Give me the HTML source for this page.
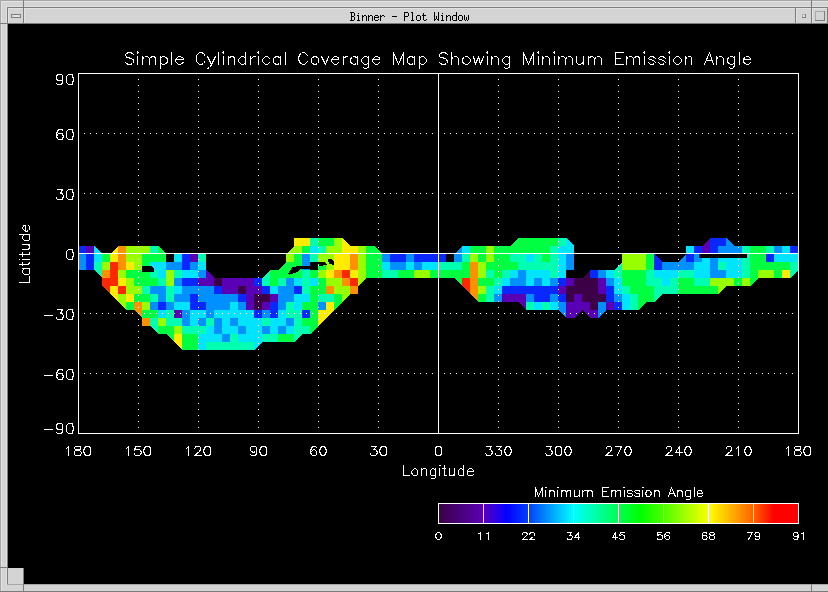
<!DOCTYPE html>
<html><head><meta charset="utf-8"><style>html,body{margin:0;padding:0;background:#000;overflow:hidden}svg{display:block}</style></head>
<body><svg width="828" height="592" viewBox="0 0 828 592" shape-rendering="crispEdges">
<rect x="0" y="0" width="828" height="592" fill="#d4d4d4"/><rect x="0" y="0" width="828" height="1" fill="#a8a8a8"/><rect x="0" y="0" width="1" height="592" fill="#a8a8a8"/><rect x="1" y="1" width="827" height="1" fill="#e2e2e2"/><rect x="1" y="1" width="1" height="591" fill="#e2e2e2"/><rect x="8" y="8" width="820" height="1" fill="#e2e2e2"/><rect x="8" y="8" width="1" height="15" fill="#e2e2e2"/><rect x="24" y="8" width="1" height="15" fill="#e2e2e2"/><rect x="796" y="8" width="1" height="15" fill="#e2e2e2"/><rect x="812" y="8" width="1" height="15" fill="#e2e2e2"/><rect x="6" y="6" width="822" height="1" fill="#e2e2e2"/><rect x="6" y="6" width="1" height="578" fill="#e2e2e2"/><rect x="8" y="24" width="820" height="560" fill="#000"/><rect x="7" y="7" width="821" height="1" fill="#7c7c7c"/><rect x="7" y="7" width="1" height="577" fill="#7c7c7c"/><rect x="0" y="23" width="828" height="1" fill="#7c7c7c"/><rect x="23" y="0" width="1" height="24" fill="#7c7c7c"/><rect x="811" y="0" width="1" height="24" fill="#7c7c7c"/><rect x="795" y="8" width="1" height="16" fill="#7c7c7c"/><rect x="827" y="8" width="1" height="16" fill="#7c7c7c"/><rect x="0" y="567" width="8" height="1" fill="#7c7c7c"/><rect x="8" y="568" width="16" height="16" fill="#d4d4d4"/><rect x="7" y="584" width="821" height="1" fill="#a8a8a8"/><rect x="23" y="568" width="1" height="24" fill="#7c7c7c"/><rect x="811" y="584" width="1" height="8" fill="#7c7c7c"/><rect x="0" y="591" width="828" height="1" fill="#7c7c7c"/><rect x="11" y="14" width="10" height="4" fill="#7c7c7c"/><rect x="12" y="15" width="8" height="2" fill="#e2e2e2"/><rect x="802" y="14" width="4" height="4" fill="#7c7c7c"/><rect x="802" y="14" width="3" height="3" fill="#b0b0b0"/><rect x="803" y="15" width="2" height="2" fill="#e2e2e2"/><rect x="815" y="11" width="10" height="10" fill="#7c7c7c"/><rect x="815" y="11" width="9" height="9" fill="#a8a8a8"/><rect x="816" y="12" width="8" height="8" fill="#d4d4d4"/><path fill="#000" d="M350 12h4v1h-4zM404 12h4v1h-4zM411 12h2v1h-2zM434 12h1v1h-1zM438 12h1v1h-1zM456 12h1v1h-1zM351 13h1v1h-1zM354 13h1v1h-1zM358 13h1v1h-1zM404 13h1v1h-1zM408 13h1v1h-1zM412 13h1v1h-1zM423 13h1v1h-1zM434 13h1v1h-1zM438 13h1v1h-1zM442 13h1v1h-1zM456 13h1v1h-1zM351 14h1v1h-1zM354 14h1v1h-1zM404 14h1v1h-1zM408 14h1v1h-1zM412 14h1v1h-1zM423 14h1v1h-1zM434 14h1v1h-1zM438 14h1v1h-1zM456 14h1v1h-1zM351 15h1v1h-1zM354 15h1v1h-1zM357 15h2v1h-2zM362 15h1v1h-1zM364 15h2v1h-2zM368 15h1v1h-1zM370 15h2v1h-2zM375 15h3v1h-3zM380 15h1v1h-1zM382 15h2v1h-2zM404 15h1v1h-1zM408 15h1v1h-1zM412 15h1v1h-1zM417 15h3v1h-3zM422 15h4v1h-4zM434 15h1v1h-1zM438 15h1v1h-1zM441 15h2v1h-2zM446 15h1v1h-1zM448 15h2v1h-2zM453 15h4v1h-4zM459 15h3v1h-3zM464 15h1v1h-1zM468 15h1v1h-1zM351 16h3v1h-3zM358 16h1v1h-1zM362 16h2v1h-2zM366 16h1v1h-1zM368 16h2v1h-2zM372 16h1v1h-1zM374 16h1v1h-1zM378 16h1v1h-1zM380 16h2v1h-2zM384 16h1v1h-1zM392 16h5v1h-5zM404 16h4v1h-4zM412 16h1v1h-1zM416 16h1v1h-1zM420 16h1v1h-1zM423 16h1v1h-1zM434 16h1v1h-1zM436 16h1v1h-1zM438 16h1v1h-1zM442 16h1v1h-1zM446 16h2v1h-2zM450 16h1v1h-1zM452 16h1v1h-1zM456 16h1v1h-1zM458 16h1v1h-1zM462 16h1v1h-1zM464 16h1v1h-1zM468 16h1v1h-1zM351 17h1v1h-1zM354 17h1v1h-1zM358 17h1v1h-1zM362 17h1v1h-1zM366 17h1v1h-1zM368 17h1v1h-1zM372 17h1v1h-1zM374 17h5v1h-5zM380 17h1v1h-1zM404 17h1v1h-1zM412 17h1v1h-1zM416 17h1v1h-1zM420 17h1v1h-1zM423 17h1v1h-1zM434 17h1v1h-1zM436 17h1v1h-1zM438 17h1v1h-1zM442 17h1v1h-1zM446 17h1v1h-1zM450 17h1v1h-1zM452 17h1v1h-1zM456 17h1v1h-1zM458 17h1v1h-1zM462 17h1v1h-1zM464 17h1v1h-1zM466 17h1v1h-1zM468 17h1v1h-1zM351 18h1v1h-1zM354 18h1v1h-1zM358 18h1v1h-1zM362 18h1v1h-1zM366 18h1v1h-1zM368 18h1v1h-1zM372 18h1v1h-1zM374 18h1v1h-1zM380 18h1v1h-1zM404 18h1v1h-1zM412 18h1v1h-1zM416 18h1v1h-1zM420 18h1v1h-1zM423 18h1v1h-1zM434 18h1v1h-1zM436 18h1v1h-1zM438 18h1v1h-1zM442 18h1v1h-1zM446 18h1v1h-1zM450 18h1v1h-1zM452 18h1v1h-1zM456 18h1v1h-1zM458 18h1v1h-1zM462 18h1v1h-1zM464 18h1v1h-1zM466 18h1v1h-1zM468 18h1v1h-1zM351 19h1v1h-1zM354 19h1v1h-1zM358 19h1v1h-1zM362 19h1v1h-1zM366 19h1v1h-1zM368 19h1v1h-1zM372 19h1v1h-1zM374 19h1v1h-1zM378 19h1v1h-1zM380 19h1v1h-1zM404 19h1v1h-1zM412 19h1v1h-1zM416 19h1v1h-1zM420 19h1v1h-1zM423 19h1v1h-1zM426 19h1v1h-1zM434 19h2v1h-2zM437 19h2v1h-2zM442 19h1v1h-1zM446 19h1v1h-1zM450 19h1v1h-1zM452 19h1v1h-1zM456 19h1v1h-1zM458 19h1v1h-1zM462 19h1v1h-1zM464 19h1v1h-1zM466 19h1v1h-1zM468 19h1v1h-1zM350 20h4v1h-4zM357 20h3v1h-3zM362 20h1v1h-1zM366 20h1v1h-1zM368 20h1v1h-1zM372 20h1v1h-1zM375 20h3v1h-3zM380 20h1v1h-1zM404 20h1v1h-1zM411 20h3v1h-3zM417 20h3v1h-3zM424 20h2v1h-2zM434 20h1v1h-1zM438 20h1v1h-1zM441 20h3v1h-3zM446 20h1v1h-1zM450 20h1v1h-1zM453 20h4v1h-4zM459 20h3v1h-3zM465 20h1v1h-1zM467 20h1v1h-1z"/><path fill="#0828ff" d="M78 246h8v8h-8zM86 254h8v8h-8zM86 262h8v8h-8zM182 254h8v8h-8zM182 262h8v8h-8zM182 278h8v8h-8zM190 278h8v8h-8zM254 278h8v8h-8zM390 254h8v8h-8zM398 254h8v8h-8zM414 254h8v8h-8zM422 254h8v8h-8zM430 254h8v8h-8zM438 254h8v8h-8zM558 278h8v8h-8zM590 270h8v8h-8zM710 238h8v8h-8zM694 246h8v8h-8zM710 246h8v8h-8zM686 254h8v8h-8zM654 262h8v8h-8zM718 238h8v8h-8zM790 246h8v8h-8zM766 254h8v8h-8zM190 294h8v8h-8zM158 302h8v8h-8zM190 302h8v8h-8zM198 302h8v8h-8zM214 286h8v8h-8zM262 286h8v8h-8zM238 294h8v8h-8zM254 310h8v8h-8zM294 286h8v8h-8zM270 302h8v8h-8zM270 310h8v8h-8zM302 310h8v8h-8zM502 286h8v8h-8zM510 286h8v8h-8zM518 286h8v8h-8zM526 286h8v8h-8zM534 286h8v8h-8zM542 286h8v8h-8zM550 286h8v8h-8zM534 294h8v8h-8zM542 294h8v8h-8zM558 294h8v8h-8zM606 286h8v8h-8zM606 294h8v8h-8zM614 302h8v8h-8zM654 254L654 262L662 262z"/><path fill="#5a00b4" d="M86 246h8v8h-8zM190 254h8v8h-8zM198 278h8v8h-8zM206 278h8v8h-8zM222 278h8v8h-8zM230 278h8v8h-8zM238 278h8v8h-8zM246 278h8v8h-8zM566 278h8v8h-8zM598 278h8v8h-8zM702 246h8v8h-8zM174 310h8v8h-8zM222 286h8v8h-8zM230 286h8v8h-8zM246 286h8v8h-8zM254 286h8v8h-8zM246 294h8v8h-8zM246 302h8v8h-8zM262 302h8v8h-8zM270 294h8v8h-8zM502 294h8v8h-8zM510 294h8v8h-8zM518 294h8v8h-8zM558 286h8v8h-8zM574 294h8v8h-8zM566 302h8v8h-8zM574 302h8v8h-8zM582 302h8v8h-8zM566 310h8v8h-8zM598 286h8v8h-8zM606 302h8v8h-8zM590 310h8v8h-8zM206 270L206 278L214 278zM518 302L526 302L526 310zM574 310L582 310L574 318zM582 310L590 310L590 318zM710 238L710 246L702 246z"/><path fill="#ff9000" d="M118 246h8v8h-8zM118 254h8v8h-8zM118 262h8v8h-8zM102 270h8v8h-8zM350 254h8v8h-8zM350 262h8v8h-8zM334 270h8v8h-8zM342 278h8v8h-8zM470 262h8v8h-8zM470 270h8v8h-8zM470 278h8v8h-8zM134 302h8v8h-8zM142 318h8v8h-8zM326 286h8v8h-8zM350 286h8v8h-8zM470 286h8v8h-8zM134 310L142 310L142 318zM470 294L478 294L478 302z"/><path fill="#98ff00" d="M126 246h8v8h-8zM134 246h8v8h-8zM126 254h8v8h-8zM134 254h8v8h-8zM102 262h8v8h-8zM134 262h8v8h-8zM118 270h8v8h-8zM126 278h8v8h-8zM142 246h8v8h-8zM166 270h8v8h-8zM166 278h8v8h-8zM294 246h8v8h-8zM326 246h8v8h-8zM286 254h8v8h-8zM318 254h8v8h-8zM326 254h8v8h-8zM326 262h8v8h-8zM318 270h8v8h-8zM326 278h8v8h-8zM334 238h8v8h-8zM334 246h8v8h-8zM358 246h8v8h-8zM358 254h8v8h-8zM358 262h8v8h-8zM358 270h8v8h-8zM334 278h8v8h-8zM414 270h8v8h-8zM422 270h8v8h-8zM486 246h8v8h-8zM470 254h8v8h-8zM486 254h8v8h-8zM478 262h8v8h-8zM478 270h8v8h-8zM622 254h8v8h-8zM630 254h8v8h-8zM638 254h8v8h-8zM622 262h8v8h-8zM630 262h8v8h-8zM638 262h8v8h-8zM710 278h8v8h-8zM758 270h8v8h-8zM766 270h8v8h-8zM718 278h8v8h-8zM726 278h8v8h-8zM742 278h8v8h-8zM126 286h8v8h-8zM134 286h8v8h-8zM118 294h8v8h-8zM142 302h8v8h-8zM158 318h8v8h-8zM174 326h8v8h-8zM334 286h8v8h-8zM342 286h8v8h-8zM478 286h8v8h-8zM118 302L126 302L126 310zM294 246L294 254L286 254zM342 294L350 294L342 302zM358 278L366 278L358 286zM718 286L726 286L718 294z"/><path fill="#0090ff" d="M78 254h8v8h-8zM78 262h8v8h-8zM166 262h8v8h-8zM174 262h8v8h-8zM190 262h8v8h-8zM198 270h8v8h-8zM174 278h8v8h-8zM302 254h8v8h-8zM302 262h8v8h-8zM286 278h8v8h-8zM382 254h8v8h-8zM390 262h8v8h-8zM406 254h8v8h-8zM454 254h8v8h-8zM398 262h8v8h-8zM414 262h8v8h-8zM518 270h8v8h-8zM510 278h8v8h-8zM518 278h8v8h-8zM566 254h8v8h-8zM566 262h8v8h-8zM534 278h8v8h-8zM550 278h8v8h-8zM598 270h8v8h-8zM606 278h8v8h-8zM694 254h8v8h-8zM710 254h8v8h-8zM662 262h8v8h-8zM670 262h8v8h-8zM678 262h8v8h-8zM686 262h8v8h-8zM710 262h8v8h-8zM710 270h8v8h-8zM718 246h8v8h-8zM726 246h8v8h-8zM734 246h8v8h-8zM774 246h8v8h-8zM718 270h8v8h-8zM150 286h8v8h-8zM158 286h8v8h-8zM182 286h8v8h-8zM190 286h8v8h-8zM198 286h8v8h-8zM158 294h8v8h-8zM174 294h8v8h-8zM182 294h8v8h-8zM198 294h8v8h-8zM150 302h8v8h-8zM166 302h8v8h-8zM182 310h8v8h-8zM182 318h8v8h-8zM198 318h8v8h-8zM206 286h8v8h-8zM206 294h8v8h-8zM214 294h8v8h-8zM222 294h8v8h-8zM230 294h8v8h-8zM206 302h8v8h-8zM214 302h8v8h-8zM222 302h8v8h-8zM238 302h8v8h-8zM206 310h8v8h-8zM262 310h8v8h-8zM214 318h8v8h-8zM230 318h8v8h-8zM214 326h8v8h-8zM238 326h8v8h-8zM262 326h8v8h-8zM222 334h8v8h-8zM278 286h8v8h-8zM286 286h8v8h-8zM278 294h8v8h-8zM286 294h8v8h-8zM278 302h8v8h-8zM318 302h8v8h-8zM286 318h8v8h-8zM278 326h8v8h-8zM494 294h8v8h-8zM526 294h8v8h-8zM550 294h8v8h-8zM558 302h8v8h-8zM614 294h8v8h-8zM598 302h8v8h-8zM462 246L462 254L454 254zM558 310L566 310L566 318zM598 310L606 310L598 318zM686 254L686 262L678 262zM726 238L726 246L734 246z"/><path fill="#00e4ff" d="M94 254h8v8h-8zM174 254h8v8h-8zM150 262h8v8h-8zM158 262h8v8h-8zM198 262h8v8h-8zM158 270h8v8h-8zM182 270h8v8h-8zM190 270h8v8h-8zM310 246h8v8h-8zM294 278h8v8h-8zM310 278h8v8h-8zM382 262h8v8h-8zM406 262h8v8h-8zM422 262h8v8h-8zM430 262h8v8h-8zM462 246h8v8h-8zM510 270h8v8h-8zM502 278h8v8h-8zM558 246h8v8h-8zM566 246h8v8h-8zM526 254h8v8h-8zM558 254h8v8h-8zM558 262h8v8h-8zM526 270h8v8h-8zM534 270h8v8h-8zM542 270h8v8h-8zM558 270h8v8h-8zM526 278h8v8h-8zM542 278h8v8h-8zM606 270h8v8h-8zM614 278h8v8h-8zM686 246h8v8h-8zM702 254h8v8h-8zM694 262h8v8h-8zM702 262h8v8h-8zM654 270h8v8h-8zM662 270h8v8h-8zM670 270h8v8h-8zM694 270h8v8h-8zM702 270h8v8h-8zM662 278h8v8h-8zM782 246h8v8h-8zM718 254h8v8h-8zM726 254h8v8h-8zM734 254h8v8h-8zM774 254h8v8h-8zM782 254h8v8h-8zM790 254h8v8h-8zM726 262h8v8h-8zM734 262h8v8h-8zM726 270h8v8h-8zM734 270h8v8h-8zM174 286h8v8h-8zM174 302h8v8h-8zM182 302h8v8h-8zM158 310h8v8h-8zM190 310h8v8h-8zM198 310h8v8h-8zM190 318h8v8h-8zM198 334h8v8h-8zM198 342h8v8h-8zM230 302h8v8h-8zM214 310h8v8h-8zM222 310h8v8h-8zM230 310h8v8h-8zM238 310h8v8h-8zM246 310h8v8h-8zM222 318h8v8h-8zM238 318h8v8h-8zM246 318h8v8h-8zM254 318h8v8h-8zM206 326h8v8h-8zM222 326h8v8h-8zM230 326h8v8h-8zM246 326h8v8h-8zM254 326h8v8h-8zM206 334h8v8h-8zM214 334h8v8h-8zM238 334h8v8h-8zM246 334h8v8h-8zM254 334h8v8h-8zM270 286h8v8h-8zM294 294h8v8h-8zM302 294h8v8h-8zM294 302h8v8h-8zM278 310h8v8h-8zM270 318h8v8h-8zM278 318h8v8h-8zM270 326h8v8h-8zM286 326h8v8h-8zM494 286h8v8h-8zM534 302h8v8h-8zM550 302h8v8h-8zM614 286h8v8h-8zM622 294h8v8h-8zM622 302h8v8h-8zM94 246L94 254L102 254zM254 342L262 342L254 350zM566 238L566 246L574 246z"/><path fill="#00ff40" d="M102 254h8v8h-8zM126 270h8v8h-8zM134 270h8v8h-8zM134 278h8v8h-8zM142 254h8v8h-8zM150 254h8v8h-8zM158 254h8v8h-8zM142 262h8v8h-8zM142 270h8v8h-8zM142 278h8v8h-8zM150 278h8v8h-8zM318 238h8v8h-8zM326 238h8v8h-8zM302 246h8v8h-8zM294 254h8v8h-8zM286 262h8v8h-8zM294 262h8v8h-8zM318 262h8v8h-8zM270 270h8v8h-8zM278 270h8v8h-8zM286 270h8v8h-8zM294 270h8v8h-8zM310 270h8v8h-8zM270 278h8v8h-8zM318 278h8v8h-8zM366 246h8v8h-8zM366 254h8v8h-8zM374 254h8v8h-8zM366 262h8v8h-8zM374 262h8v8h-8zM366 270h8v8h-8zM374 270h8v8h-8zM398 270h8v8h-8zM406 270h8v8h-8zM430 270h8v8h-8zM438 270h8v8h-8zM446 270h8v8h-8zM454 270h8v8h-8zM518 238h8v8h-8zM470 246h8v8h-8zM478 246h8v8h-8zM494 246h8v8h-8zM502 246h8v8h-8zM510 246h8v8h-8zM518 246h8v8h-8zM478 254h8v8h-8zM494 254h8v8h-8zM502 254h8v8h-8zM462 262h8v8h-8zM486 262h8v8h-8zM494 262h8v8h-8zM502 262h8v8h-8zM510 262h8v8h-8zM462 270h8v8h-8zM494 270h8v8h-8zM478 278h8v8h-8zM486 278h8v8h-8zM526 238h8v8h-8zM534 238h8v8h-8zM542 238h8v8h-8zM550 238h8v8h-8zM526 246h8v8h-8zM534 246h8v8h-8zM542 246h8v8h-8zM542 254h8v8h-8zM646 254h8v8h-8zM646 262h8v8h-8zM622 270h8v8h-8zM630 270h8v8h-8zM638 270h8v8h-8zM622 278h8v8h-8zM630 278h8v8h-8zM638 278h8v8h-8zM678 278h8v8h-8zM686 278h8v8h-8zM750 246h8v8h-8zM758 246h8v8h-8zM750 254h8v8h-8zM758 254h8v8h-8zM750 262h8v8h-8zM758 262h8v8h-8zM766 262h8v8h-8zM774 262h8v8h-8zM782 262h8v8h-8zM750 270h8v8h-8zM774 270h8v8h-8zM734 278h8v8h-8zM134 294h8v8h-8zM126 302h8v8h-8zM142 294h8v8h-8zM142 310h8v8h-8zM150 310h8v8h-8zM158 326h8v8h-8zM166 326h8v8h-8zM182 334h8v8h-8zM190 334h8v8h-8zM182 342h8v8h-8zM190 342h8v8h-8zM310 286h8v8h-8zM318 286h8v8h-8zM310 294h8v8h-8zM302 302h8v8h-8zM310 302h8v8h-8zM310 310h8v8h-8zM302 318h8v8h-8zM310 318h8v8h-8zM278 334h8v8h-8zM286 334h8v8h-8zM334 294h8v8h-8zM478 294h8v8h-8zM630 286h8v8h-8zM638 286h8v8h-8zM646 286h8v8h-8zM638 294h8v8h-8zM646 294h8v8h-8zM678 286h8v8h-8zM686 286h8v8h-8zM694 286h8v8h-8zM702 286h8v8h-8zM710 286h8v8h-8zM158 246L158 254L166 254zM166 334L174 334L174 342zM286 262L286 270L278 270zM310 326L318 326L310 334zM334 302L342 302L334 310zM374 246L374 254L382 254zM454 278L462 278L462 286zM518 238L518 246L510 246zM638 302L646 302L638 310zM750 278L758 278L750 286z"/><path fill="#ffec00" d="M110 254h8v8h-8zM126 262h8v8h-8zM118 278h8v8h-8zM294 238h8v8h-8zM302 238h8v8h-8zM326 270h8v8h-8zM342 246h8v8h-8zM350 246h8v8h-8zM334 254h8v8h-8zM342 254h8v8h-8zM334 262h8v8h-8zM342 262h8v8h-8zM350 270h8v8h-8zM782 270h8v8h-8zM110 286h8v8h-8zM126 294h8v8h-8zM174 334h8v8h-8zM326 302h8v8h-8zM318 310h8v8h-8zM118 246L118 254L110 254zM110 294L118 294L118 302zM174 342L182 342L182 350zM318 318L326 318L318 326zM326 310L334 310L326 318zM342 238L342 246L350 246z"/><path fill="#00ffb0" d="M94 262h8v8h-8zM150 246h8v8h-8zM198 254h8v8h-8zM150 270h8v8h-8zM174 270h8v8h-8zM158 278h8v8h-8zM262 278h8v8h-8zM310 238h8v8h-8zM318 246h8v8h-8zM310 254h8v8h-8zM302 270h8v8h-8zM278 278h8v8h-8zM302 278h8v8h-8zM382 270h8v8h-8zM390 270h8v8h-8zM438 262h8v8h-8zM446 262h8v8h-8zM454 262h8v8h-8zM462 254h8v8h-8zM510 254h8v8h-8zM518 254h8v8h-8zM518 262h8v8h-8zM486 270h8v8h-8zM502 270h8v8h-8zM494 278h8v8h-8zM558 238h8v8h-8zM550 246h8v8h-8zM534 254h8v8h-8zM550 254h8v8h-8zM526 262h8v8h-8zM534 262h8v8h-8zM542 262h8v8h-8zM550 262h8v8h-8zM550 270h8v8h-8zM614 270h8v8h-8zM646 270h8v8h-8zM646 278h8v8h-8zM678 270h8v8h-8zM686 270h8v8h-8zM654 278h8v8h-8zM670 278h8v8h-8zM694 278h8v8h-8zM702 278h8v8h-8zM742 246h8v8h-8zM766 246h8v8h-8zM742 254h8v8h-8zM718 262h8v8h-8zM742 262h8v8h-8zM790 262h8v8h-8zM742 270h8v8h-8zM142 286h8v8h-8zM166 286h8v8h-8zM150 294h8v8h-8zM166 294h8v8h-8zM166 310h8v8h-8zM150 318h8v8h-8zM166 318h8v8h-8zM174 318h8v8h-8zM182 326h8v8h-8zM190 326h8v8h-8zM198 326h8v8h-8zM206 318h8v8h-8zM262 318h8v8h-8zM230 334h8v8h-8zM262 334h8v8h-8zM206 342h8v8h-8zM214 342h8v8h-8zM222 342h8v8h-8zM230 342h8v8h-8zM238 342h8v8h-8zM246 342h8v8h-8zM302 286h8v8h-8zM318 294h8v8h-8zM326 294h8v8h-8zM286 302h8v8h-8zM286 310h8v8h-8zM294 310h8v8h-8zM294 318h8v8h-8zM294 326h8v8h-8zM302 326h8v8h-8zM270 334h8v8h-8zM486 286h8v8h-8zM486 294h8v8h-8zM526 302h8v8h-8zM542 302h8v8h-8zM622 286h8v8h-8zM630 294h8v8h-8zM630 302h8v8h-8zM654 286h8v8h-8zM662 286h8v8h-8zM670 286h8v8h-8zM94 270L102 270L102 278zM150 326L158 326L158 334zM270 270L270 278L262 278zM294 334L302 334L294 342zM622 262L622 270L614 270zM654 294L662 294L654 302zM790 270L798 270L790 278z"/><path fill="#ff2800" d="M110 262h8v8h-8zM110 270h8v8h-8zM102 278h8v8h-8zM110 278h8v8h-8zM342 270h8v8h-8zM350 278h8v8h-8zM462 278h8v8h-8zM118 286h8v8h-8zM102 286L110 286L110 294zM462 286L470 286L470 294z"/><path fill="#3c0046" d="M214 278h8v8h-8zM574 278h8v8h-8zM582 278h8v8h-8zM590 278h8v8h-8zM238 286h8v8h-8zM254 294h8v8h-8zM262 294h8v8h-8zM254 302h8v8h-8zM566 286h8v8h-8zM574 286h8v8h-8zM582 286h8v8h-8zM566 294h8v8h-8zM582 294h8v8h-8zM590 286h8v8h-8zM590 294h8v8h-8zM598 294h8v8h-8zM590 302h8v8h-8zM590 270L590 278L582 278z"/><polygon fill="#000" points="142,266 151,266 154,269 154,272 142,272"/><polygon fill="#000" points="288,274 292,267 299,266 314,266 314,269 301,269 297,272 289,275"/><polygon fill="#000" points="318,262 324,262 327,265 319,266"/><polygon fill="#000" points="328,259 331,259 334,262 334,265 329,264"/><polygon fill="#000" points="699,254 747,254 747,258 699,258"/><path d="M138 79h1v1h-1zM138 85h1v1h-1zM138 91h1v1h-1zM138 97h1v1h-1zM138 103h1v1h-1zM138 109h1v1h-1zM138 115h1v1h-1zM138 121h1v1h-1zM138 127h1v1h-1zM138 133h1v1h-1zM138 139h1v1h-1zM138 145h1v1h-1zM138 151h1v1h-1zM138 157h1v1h-1zM138 163h1v1h-1zM138 169h1v1h-1zM138 175h1v1h-1zM138 181h1v1h-1zM138 187h1v1h-1zM138 193h1v1h-1zM138 199h1v1h-1zM138 205h1v1h-1zM138 211h1v1h-1zM138 217h1v1h-1zM138 223h1v1h-1zM138 229h1v1h-1zM138 235h1v1h-1zM138 241h1v1h-1zM138 247h1v1h-1zM138 253h1v1h-1zM138 259h1v1h-1zM138 265h1v1h-1zM138 271h1v1h-1zM138 277h1v1h-1zM138 283h1v1h-1zM138 289h1v1h-1zM138 295h1v1h-1zM138 301h1v1h-1zM138 307h1v1h-1zM138 313h1v1h-1zM138 319h1v1h-1zM138 325h1v1h-1zM138 331h1v1h-1zM138 337h1v1h-1zM138 343h1v1h-1zM138 349h1v1h-1zM138 355h1v1h-1zM138 361h1v1h-1zM138 367h1v1h-1zM138 373h1v1h-1zM138 379h1v1h-1zM138 385h1v1h-1zM138 391h1v1h-1zM138 397h1v1h-1zM138 403h1v1h-1zM138 409h1v1h-1zM138 415h1v1h-1zM138 421h1v1h-1zM138 427h1v1h-1zM198 79h1v1h-1zM198 85h1v1h-1zM198 91h1v1h-1zM198 97h1v1h-1zM198 103h1v1h-1zM198 109h1v1h-1zM198 115h1v1h-1zM198 121h1v1h-1zM198 127h1v1h-1zM198 133h1v1h-1zM198 139h1v1h-1zM198 145h1v1h-1zM198 151h1v1h-1zM198 157h1v1h-1zM198 163h1v1h-1zM198 169h1v1h-1zM198 175h1v1h-1zM198 181h1v1h-1zM198 187h1v1h-1zM198 193h1v1h-1zM198 199h1v1h-1zM198 205h1v1h-1zM198 211h1v1h-1zM198 217h1v1h-1zM198 223h1v1h-1zM198 229h1v1h-1zM198 235h1v1h-1zM198 241h1v1h-1zM198 247h1v1h-1zM198 253h1v1h-1zM198 259h1v1h-1zM198 265h1v1h-1zM198 271h1v1h-1zM198 277h1v1h-1zM198 283h1v1h-1zM198 289h1v1h-1zM198 295h1v1h-1zM198 301h1v1h-1zM198 307h1v1h-1zM198 313h1v1h-1zM198 319h1v1h-1zM198 325h1v1h-1zM198 331h1v1h-1zM198 337h1v1h-1zM198 343h1v1h-1zM198 349h1v1h-1zM198 355h1v1h-1zM198 361h1v1h-1zM198 367h1v1h-1zM198 373h1v1h-1zM198 379h1v1h-1zM198 385h1v1h-1zM198 391h1v1h-1zM198 397h1v1h-1zM198 403h1v1h-1zM198 409h1v1h-1zM198 415h1v1h-1zM198 421h1v1h-1zM198 427h1v1h-1zM258 79h1v1h-1zM258 85h1v1h-1zM258 91h1v1h-1zM258 97h1v1h-1zM258 103h1v1h-1zM258 109h1v1h-1zM258 115h1v1h-1zM258 121h1v1h-1zM258 127h1v1h-1zM258 133h1v1h-1zM258 139h1v1h-1zM258 145h1v1h-1zM258 151h1v1h-1zM258 157h1v1h-1zM258 163h1v1h-1zM258 169h1v1h-1zM258 175h1v1h-1zM258 181h1v1h-1zM258 187h1v1h-1zM258 193h1v1h-1zM258 199h1v1h-1zM258 205h1v1h-1zM258 211h1v1h-1zM258 217h1v1h-1zM258 223h1v1h-1zM258 229h1v1h-1zM258 235h1v1h-1zM258 241h1v1h-1zM258 247h1v1h-1zM258 253h1v1h-1zM258 259h1v1h-1zM258 265h1v1h-1zM258 271h1v1h-1zM258 277h1v1h-1zM258 283h1v1h-1zM258 289h1v1h-1zM258 295h1v1h-1zM258 301h1v1h-1zM258 307h1v1h-1zM258 313h1v1h-1zM258 319h1v1h-1zM258 325h1v1h-1zM258 331h1v1h-1zM258 337h1v1h-1zM258 343h1v1h-1zM258 349h1v1h-1zM258 355h1v1h-1zM258 361h1v1h-1zM258 367h1v1h-1zM258 373h1v1h-1zM258 379h1v1h-1zM258 385h1v1h-1zM258 391h1v1h-1zM258 397h1v1h-1zM258 403h1v1h-1zM258 409h1v1h-1zM258 415h1v1h-1zM258 421h1v1h-1zM258 427h1v1h-1zM318 79h1v1h-1zM318 85h1v1h-1zM318 91h1v1h-1zM318 97h1v1h-1zM318 103h1v1h-1zM318 109h1v1h-1zM318 115h1v1h-1zM318 121h1v1h-1zM318 127h1v1h-1zM318 133h1v1h-1zM318 139h1v1h-1zM318 145h1v1h-1zM318 151h1v1h-1zM318 157h1v1h-1zM318 163h1v1h-1zM318 169h1v1h-1zM318 175h1v1h-1zM318 181h1v1h-1zM318 187h1v1h-1zM318 193h1v1h-1zM318 199h1v1h-1zM318 205h1v1h-1zM318 211h1v1h-1zM318 217h1v1h-1zM318 223h1v1h-1zM318 229h1v1h-1zM318 235h1v1h-1zM318 241h1v1h-1zM318 247h1v1h-1zM318 253h1v1h-1zM318 259h1v1h-1zM318 265h1v1h-1zM318 271h1v1h-1zM318 277h1v1h-1zM318 283h1v1h-1zM318 289h1v1h-1zM318 295h1v1h-1zM318 301h1v1h-1zM318 307h1v1h-1zM318 313h1v1h-1zM318 319h1v1h-1zM318 325h1v1h-1zM318 331h1v1h-1zM318 337h1v1h-1zM318 343h1v1h-1zM318 349h1v1h-1zM318 355h1v1h-1zM318 361h1v1h-1zM318 367h1v1h-1zM318 373h1v1h-1zM318 379h1v1h-1zM318 385h1v1h-1zM318 391h1v1h-1zM318 397h1v1h-1zM318 403h1v1h-1zM318 409h1v1h-1zM318 415h1v1h-1zM318 421h1v1h-1zM318 427h1v1h-1zM378 79h1v1h-1zM378 85h1v1h-1zM378 91h1v1h-1zM378 97h1v1h-1zM378 103h1v1h-1zM378 109h1v1h-1zM378 115h1v1h-1zM378 121h1v1h-1zM378 127h1v1h-1zM378 133h1v1h-1zM378 139h1v1h-1zM378 145h1v1h-1zM378 151h1v1h-1zM378 157h1v1h-1zM378 163h1v1h-1zM378 169h1v1h-1zM378 175h1v1h-1zM378 181h1v1h-1zM378 187h1v1h-1zM378 193h1v1h-1zM378 199h1v1h-1zM378 205h1v1h-1zM378 211h1v1h-1zM378 217h1v1h-1zM378 223h1v1h-1zM378 229h1v1h-1zM378 235h1v1h-1zM378 241h1v1h-1zM378 247h1v1h-1zM378 253h1v1h-1zM378 259h1v1h-1zM378 265h1v1h-1zM378 271h1v1h-1zM378 277h1v1h-1zM378 283h1v1h-1zM378 289h1v1h-1zM378 295h1v1h-1zM378 301h1v1h-1zM378 307h1v1h-1zM378 313h1v1h-1zM378 319h1v1h-1zM378 325h1v1h-1zM378 331h1v1h-1zM378 337h1v1h-1zM378 343h1v1h-1zM378 349h1v1h-1zM378 355h1v1h-1zM378 361h1v1h-1zM378 367h1v1h-1zM378 373h1v1h-1zM378 379h1v1h-1zM378 385h1v1h-1zM378 391h1v1h-1zM378 397h1v1h-1zM378 403h1v1h-1zM378 409h1v1h-1zM378 415h1v1h-1zM378 421h1v1h-1zM378 427h1v1h-1zM498 79h1v1h-1zM498 85h1v1h-1zM498 91h1v1h-1zM498 97h1v1h-1zM498 103h1v1h-1zM498 109h1v1h-1zM498 115h1v1h-1zM498 121h1v1h-1zM498 127h1v1h-1zM498 133h1v1h-1zM498 139h1v1h-1zM498 145h1v1h-1zM498 151h1v1h-1zM498 157h1v1h-1zM498 163h1v1h-1zM498 169h1v1h-1zM498 175h1v1h-1zM498 181h1v1h-1zM498 187h1v1h-1zM498 193h1v1h-1zM498 199h1v1h-1zM498 205h1v1h-1zM498 211h1v1h-1zM498 217h1v1h-1zM498 223h1v1h-1zM498 229h1v1h-1zM498 235h1v1h-1zM498 241h1v1h-1zM498 247h1v1h-1zM498 253h1v1h-1zM498 259h1v1h-1zM498 265h1v1h-1zM498 271h1v1h-1zM498 277h1v1h-1zM498 283h1v1h-1zM498 289h1v1h-1zM498 295h1v1h-1zM498 301h1v1h-1zM498 307h1v1h-1zM498 313h1v1h-1zM498 319h1v1h-1zM498 325h1v1h-1zM498 331h1v1h-1zM498 337h1v1h-1zM498 343h1v1h-1zM498 349h1v1h-1zM498 355h1v1h-1zM498 361h1v1h-1zM498 367h1v1h-1zM498 373h1v1h-1zM498 379h1v1h-1zM498 385h1v1h-1zM498 391h1v1h-1zM498 397h1v1h-1zM498 403h1v1h-1zM498 409h1v1h-1zM498 415h1v1h-1zM498 421h1v1h-1zM498 427h1v1h-1zM558 79h1v1h-1zM558 85h1v1h-1zM558 91h1v1h-1zM558 97h1v1h-1zM558 103h1v1h-1zM558 109h1v1h-1zM558 115h1v1h-1zM558 121h1v1h-1zM558 127h1v1h-1zM558 133h1v1h-1zM558 139h1v1h-1zM558 145h1v1h-1zM558 151h1v1h-1zM558 157h1v1h-1zM558 163h1v1h-1zM558 169h1v1h-1zM558 175h1v1h-1zM558 181h1v1h-1zM558 187h1v1h-1zM558 193h1v1h-1zM558 199h1v1h-1zM558 205h1v1h-1zM558 211h1v1h-1zM558 217h1v1h-1zM558 223h1v1h-1zM558 229h1v1h-1zM558 235h1v1h-1zM558 241h1v1h-1zM558 247h1v1h-1zM558 253h1v1h-1zM558 259h1v1h-1zM558 265h1v1h-1zM558 271h1v1h-1zM558 277h1v1h-1zM558 283h1v1h-1zM558 289h1v1h-1zM558 295h1v1h-1zM558 301h1v1h-1zM558 307h1v1h-1zM558 313h1v1h-1zM558 319h1v1h-1zM558 325h1v1h-1zM558 331h1v1h-1zM558 337h1v1h-1zM558 343h1v1h-1zM558 349h1v1h-1zM558 355h1v1h-1zM558 361h1v1h-1zM558 367h1v1h-1zM558 373h1v1h-1zM558 379h1v1h-1zM558 385h1v1h-1zM558 391h1v1h-1zM558 397h1v1h-1zM558 403h1v1h-1zM558 409h1v1h-1zM558 415h1v1h-1zM558 421h1v1h-1zM558 427h1v1h-1zM618 79h1v1h-1zM618 85h1v1h-1zM618 91h1v1h-1zM618 97h1v1h-1zM618 103h1v1h-1zM618 109h1v1h-1zM618 115h1v1h-1zM618 121h1v1h-1zM618 127h1v1h-1zM618 133h1v1h-1zM618 139h1v1h-1zM618 145h1v1h-1zM618 151h1v1h-1zM618 157h1v1h-1zM618 163h1v1h-1zM618 169h1v1h-1zM618 175h1v1h-1zM618 181h1v1h-1zM618 187h1v1h-1zM618 193h1v1h-1zM618 199h1v1h-1zM618 205h1v1h-1zM618 211h1v1h-1zM618 217h1v1h-1zM618 223h1v1h-1zM618 229h1v1h-1zM618 235h1v1h-1zM618 241h1v1h-1zM618 247h1v1h-1zM618 253h1v1h-1zM618 259h1v1h-1zM618 265h1v1h-1zM618 271h1v1h-1zM618 277h1v1h-1zM618 283h1v1h-1zM618 289h1v1h-1zM618 295h1v1h-1zM618 301h1v1h-1zM618 307h1v1h-1zM618 313h1v1h-1zM618 319h1v1h-1zM618 325h1v1h-1zM618 331h1v1h-1zM618 337h1v1h-1zM618 343h1v1h-1zM618 349h1v1h-1zM618 355h1v1h-1zM618 361h1v1h-1zM618 367h1v1h-1zM618 373h1v1h-1zM618 379h1v1h-1zM618 385h1v1h-1zM618 391h1v1h-1zM618 397h1v1h-1zM618 403h1v1h-1zM618 409h1v1h-1zM618 415h1v1h-1zM618 421h1v1h-1zM618 427h1v1h-1zM678 79h1v1h-1zM678 85h1v1h-1zM678 91h1v1h-1zM678 97h1v1h-1zM678 103h1v1h-1zM678 109h1v1h-1zM678 115h1v1h-1zM678 121h1v1h-1zM678 127h1v1h-1zM678 133h1v1h-1zM678 139h1v1h-1zM678 145h1v1h-1zM678 151h1v1h-1zM678 157h1v1h-1zM678 163h1v1h-1zM678 169h1v1h-1zM678 175h1v1h-1zM678 181h1v1h-1zM678 187h1v1h-1zM678 193h1v1h-1zM678 199h1v1h-1zM678 205h1v1h-1zM678 211h1v1h-1zM678 217h1v1h-1zM678 223h1v1h-1zM678 229h1v1h-1zM678 235h1v1h-1zM678 241h1v1h-1zM678 247h1v1h-1zM678 253h1v1h-1zM678 259h1v1h-1zM678 265h1v1h-1zM678 271h1v1h-1zM678 277h1v1h-1zM678 283h1v1h-1zM678 289h1v1h-1zM678 295h1v1h-1zM678 301h1v1h-1zM678 307h1v1h-1zM678 313h1v1h-1zM678 319h1v1h-1zM678 325h1v1h-1zM678 331h1v1h-1zM678 337h1v1h-1zM678 343h1v1h-1zM678 349h1v1h-1zM678 355h1v1h-1zM678 361h1v1h-1zM678 367h1v1h-1zM678 373h1v1h-1zM678 379h1v1h-1zM678 385h1v1h-1zM678 391h1v1h-1zM678 397h1v1h-1zM678 403h1v1h-1zM678 409h1v1h-1zM678 415h1v1h-1zM678 421h1v1h-1zM678 427h1v1h-1zM738 79h1v1h-1zM738 85h1v1h-1zM738 91h1v1h-1zM738 97h1v1h-1zM738 103h1v1h-1zM738 109h1v1h-1zM738 115h1v1h-1zM738 121h1v1h-1zM738 127h1v1h-1zM738 133h1v1h-1zM738 139h1v1h-1zM738 145h1v1h-1zM738 151h1v1h-1zM738 157h1v1h-1zM738 163h1v1h-1zM738 169h1v1h-1zM738 175h1v1h-1zM738 181h1v1h-1zM738 187h1v1h-1zM738 193h1v1h-1zM738 199h1v1h-1zM738 205h1v1h-1zM738 211h1v1h-1zM738 217h1v1h-1zM738 223h1v1h-1zM738 229h1v1h-1zM738 235h1v1h-1zM738 241h1v1h-1zM738 247h1v1h-1zM738 253h1v1h-1zM738 259h1v1h-1zM738 265h1v1h-1zM738 271h1v1h-1zM738 277h1v1h-1zM738 283h1v1h-1zM738 289h1v1h-1zM738 295h1v1h-1zM738 301h1v1h-1zM738 307h1v1h-1zM738 313h1v1h-1zM738 319h1v1h-1zM738 325h1v1h-1zM738 331h1v1h-1zM738 337h1v1h-1zM738 343h1v1h-1zM738 349h1v1h-1zM738 355h1v1h-1zM738 361h1v1h-1zM738 367h1v1h-1zM738 373h1v1h-1zM738 379h1v1h-1zM738 385h1v1h-1zM738 391h1v1h-1zM738 397h1v1h-1zM738 403h1v1h-1zM738 409h1v1h-1zM738 415h1v1h-1zM738 421h1v1h-1zM738 427h1v1h-1zM84 133h1v1h-1zM90 133h1v1h-1zM96 133h1v1h-1zM102 133h1v1h-1zM108 133h1v1h-1zM114 133h1v1h-1zM120 133h1v1h-1zM126 133h1v1h-1zM132 133h1v1h-1zM138 133h1v1h-1zM144 133h1v1h-1zM150 133h1v1h-1zM156 133h1v1h-1zM162 133h1v1h-1zM168 133h1v1h-1zM174 133h1v1h-1zM180 133h1v1h-1zM186 133h1v1h-1zM192 133h1v1h-1zM198 133h1v1h-1zM204 133h1v1h-1zM210 133h1v1h-1zM216 133h1v1h-1zM222 133h1v1h-1zM228 133h1v1h-1zM234 133h1v1h-1zM240 133h1v1h-1zM246 133h1v1h-1zM252 133h1v1h-1zM258 133h1v1h-1zM264 133h1v1h-1zM270 133h1v1h-1zM276 133h1v1h-1zM282 133h1v1h-1zM288 133h1v1h-1zM294 133h1v1h-1zM300 133h1v1h-1zM306 133h1v1h-1zM312 133h1v1h-1zM318 133h1v1h-1zM324 133h1v1h-1zM330 133h1v1h-1zM336 133h1v1h-1zM342 133h1v1h-1zM348 133h1v1h-1zM354 133h1v1h-1zM360 133h1v1h-1zM366 133h1v1h-1zM372 133h1v1h-1zM378 133h1v1h-1zM384 133h1v1h-1zM390 133h1v1h-1zM396 133h1v1h-1zM402 133h1v1h-1zM408 133h1v1h-1zM414 133h1v1h-1zM420 133h1v1h-1zM426 133h1v1h-1zM432 133h1v1h-1zM438 133h1v1h-1zM444 133h1v1h-1zM450 133h1v1h-1zM456 133h1v1h-1zM462 133h1v1h-1zM468 133h1v1h-1zM474 133h1v1h-1zM480 133h1v1h-1zM486 133h1v1h-1zM492 133h1v1h-1zM498 133h1v1h-1zM504 133h1v1h-1zM510 133h1v1h-1zM516 133h1v1h-1zM522 133h1v1h-1zM528 133h1v1h-1zM534 133h1v1h-1zM540 133h1v1h-1zM546 133h1v1h-1zM552 133h1v1h-1zM558 133h1v1h-1zM564 133h1v1h-1zM570 133h1v1h-1zM576 133h1v1h-1zM582 133h1v1h-1zM588 133h1v1h-1zM594 133h1v1h-1zM600 133h1v1h-1zM606 133h1v1h-1zM612 133h1v1h-1zM618 133h1v1h-1zM624 133h1v1h-1zM630 133h1v1h-1zM636 133h1v1h-1zM642 133h1v1h-1zM648 133h1v1h-1zM654 133h1v1h-1zM660 133h1v1h-1zM666 133h1v1h-1zM672 133h1v1h-1zM678 133h1v1h-1zM684 133h1v1h-1zM690 133h1v1h-1zM696 133h1v1h-1zM702 133h1v1h-1zM708 133h1v1h-1zM714 133h1v1h-1zM720 133h1v1h-1zM726 133h1v1h-1zM732 133h1v1h-1zM738 133h1v1h-1zM744 133h1v1h-1zM750 133h1v1h-1zM756 133h1v1h-1zM762 133h1v1h-1zM768 133h1v1h-1zM774 133h1v1h-1zM780 133h1v1h-1zM786 133h1v1h-1zM792 133h1v1h-1zM84 193h1v1h-1zM90 193h1v1h-1zM96 193h1v1h-1zM102 193h1v1h-1zM108 193h1v1h-1zM114 193h1v1h-1zM120 193h1v1h-1zM126 193h1v1h-1zM132 193h1v1h-1zM138 193h1v1h-1zM144 193h1v1h-1zM150 193h1v1h-1zM156 193h1v1h-1zM162 193h1v1h-1zM168 193h1v1h-1zM174 193h1v1h-1zM180 193h1v1h-1zM186 193h1v1h-1zM192 193h1v1h-1zM198 193h1v1h-1zM204 193h1v1h-1zM210 193h1v1h-1zM216 193h1v1h-1zM222 193h1v1h-1zM228 193h1v1h-1zM234 193h1v1h-1zM240 193h1v1h-1zM246 193h1v1h-1zM252 193h1v1h-1zM258 193h1v1h-1zM264 193h1v1h-1zM270 193h1v1h-1zM276 193h1v1h-1zM282 193h1v1h-1zM288 193h1v1h-1zM294 193h1v1h-1zM300 193h1v1h-1zM306 193h1v1h-1zM312 193h1v1h-1zM318 193h1v1h-1zM324 193h1v1h-1zM330 193h1v1h-1zM336 193h1v1h-1zM342 193h1v1h-1zM348 193h1v1h-1zM354 193h1v1h-1zM360 193h1v1h-1zM366 193h1v1h-1zM372 193h1v1h-1zM378 193h1v1h-1zM384 193h1v1h-1zM390 193h1v1h-1zM396 193h1v1h-1zM402 193h1v1h-1zM408 193h1v1h-1zM414 193h1v1h-1zM420 193h1v1h-1zM426 193h1v1h-1zM432 193h1v1h-1zM438 193h1v1h-1zM444 193h1v1h-1zM450 193h1v1h-1zM456 193h1v1h-1zM462 193h1v1h-1zM468 193h1v1h-1zM474 193h1v1h-1zM480 193h1v1h-1zM486 193h1v1h-1zM492 193h1v1h-1zM498 193h1v1h-1zM504 193h1v1h-1zM510 193h1v1h-1zM516 193h1v1h-1zM522 193h1v1h-1zM528 193h1v1h-1zM534 193h1v1h-1zM540 193h1v1h-1zM546 193h1v1h-1zM552 193h1v1h-1zM558 193h1v1h-1zM564 193h1v1h-1zM570 193h1v1h-1zM576 193h1v1h-1zM582 193h1v1h-1zM588 193h1v1h-1zM594 193h1v1h-1zM600 193h1v1h-1zM606 193h1v1h-1zM612 193h1v1h-1zM618 193h1v1h-1zM624 193h1v1h-1zM630 193h1v1h-1zM636 193h1v1h-1zM642 193h1v1h-1zM648 193h1v1h-1zM654 193h1v1h-1zM660 193h1v1h-1zM666 193h1v1h-1zM672 193h1v1h-1zM678 193h1v1h-1zM684 193h1v1h-1zM690 193h1v1h-1zM696 193h1v1h-1zM702 193h1v1h-1zM708 193h1v1h-1zM714 193h1v1h-1zM720 193h1v1h-1zM726 193h1v1h-1zM732 193h1v1h-1zM738 193h1v1h-1zM744 193h1v1h-1zM750 193h1v1h-1zM756 193h1v1h-1zM762 193h1v1h-1zM768 193h1v1h-1zM774 193h1v1h-1zM780 193h1v1h-1zM786 193h1v1h-1zM792 193h1v1h-1zM84 313h1v1h-1zM90 313h1v1h-1zM96 313h1v1h-1zM102 313h1v1h-1zM108 313h1v1h-1zM114 313h1v1h-1zM120 313h1v1h-1zM126 313h1v1h-1zM132 313h1v1h-1zM138 313h1v1h-1zM144 313h1v1h-1zM150 313h1v1h-1zM156 313h1v1h-1zM162 313h1v1h-1zM168 313h1v1h-1zM174 313h1v1h-1zM180 313h1v1h-1zM186 313h1v1h-1zM192 313h1v1h-1zM198 313h1v1h-1zM204 313h1v1h-1zM210 313h1v1h-1zM216 313h1v1h-1zM222 313h1v1h-1zM228 313h1v1h-1zM234 313h1v1h-1zM240 313h1v1h-1zM246 313h1v1h-1zM252 313h1v1h-1zM258 313h1v1h-1zM264 313h1v1h-1zM270 313h1v1h-1zM276 313h1v1h-1zM282 313h1v1h-1zM288 313h1v1h-1zM294 313h1v1h-1zM300 313h1v1h-1zM306 313h1v1h-1zM312 313h1v1h-1zM318 313h1v1h-1zM324 313h1v1h-1zM330 313h1v1h-1zM336 313h1v1h-1zM342 313h1v1h-1zM348 313h1v1h-1zM354 313h1v1h-1zM360 313h1v1h-1zM366 313h1v1h-1zM372 313h1v1h-1zM378 313h1v1h-1zM384 313h1v1h-1zM390 313h1v1h-1zM396 313h1v1h-1zM402 313h1v1h-1zM408 313h1v1h-1zM414 313h1v1h-1zM420 313h1v1h-1zM426 313h1v1h-1zM432 313h1v1h-1zM438 313h1v1h-1zM444 313h1v1h-1zM450 313h1v1h-1zM456 313h1v1h-1zM462 313h1v1h-1zM468 313h1v1h-1zM474 313h1v1h-1zM480 313h1v1h-1zM486 313h1v1h-1zM492 313h1v1h-1zM498 313h1v1h-1zM504 313h1v1h-1zM510 313h1v1h-1zM516 313h1v1h-1zM522 313h1v1h-1zM528 313h1v1h-1zM534 313h1v1h-1zM540 313h1v1h-1zM546 313h1v1h-1zM552 313h1v1h-1zM558 313h1v1h-1zM564 313h1v1h-1zM570 313h1v1h-1zM576 313h1v1h-1zM582 313h1v1h-1zM588 313h1v1h-1zM594 313h1v1h-1zM600 313h1v1h-1zM606 313h1v1h-1zM612 313h1v1h-1zM618 313h1v1h-1zM624 313h1v1h-1zM630 313h1v1h-1zM636 313h1v1h-1zM642 313h1v1h-1zM648 313h1v1h-1zM654 313h1v1h-1zM660 313h1v1h-1zM666 313h1v1h-1zM672 313h1v1h-1zM678 313h1v1h-1zM684 313h1v1h-1zM690 313h1v1h-1zM696 313h1v1h-1zM702 313h1v1h-1zM708 313h1v1h-1zM714 313h1v1h-1zM720 313h1v1h-1zM726 313h1v1h-1zM732 313h1v1h-1zM738 313h1v1h-1zM744 313h1v1h-1zM750 313h1v1h-1zM756 313h1v1h-1zM762 313h1v1h-1zM768 313h1v1h-1zM774 313h1v1h-1zM780 313h1v1h-1zM786 313h1v1h-1zM792 313h1v1h-1zM84 373h1v1h-1zM90 373h1v1h-1zM96 373h1v1h-1zM102 373h1v1h-1zM108 373h1v1h-1zM114 373h1v1h-1zM120 373h1v1h-1zM126 373h1v1h-1zM132 373h1v1h-1zM138 373h1v1h-1zM144 373h1v1h-1zM150 373h1v1h-1zM156 373h1v1h-1zM162 373h1v1h-1zM168 373h1v1h-1zM174 373h1v1h-1zM180 373h1v1h-1zM186 373h1v1h-1zM192 373h1v1h-1zM198 373h1v1h-1zM204 373h1v1h-1zM210 373h1v1h-1zM216 373h1v1h-1zM222 373h1v1h-1zM228 373h1v1h-1zM234 373h1v1h-1zM240 373h1v1h-1zM246 373h1v1h-1zM252 373h1v1h-1zM258 373h1v1h-1zM264 373h1v1h-1zM270 373h1v1h-1zM276 373h1v1h-1zM282 373h1v1h-1zM288 373h1v1h-1zM294 373h1v1h-1zM300 373h1v1h-1zM306 373h1v1h-1zM312 373h1v1h-1zM318 373h1v1h-1zM324 373h1v1h-1zM330 373h1v1h-1zM336 373h1v1h-1zM342 373h1v1h-1zM348 373h1v1h-1zM354 373h1v1h-1zM360 373h1v1h-1zM366 373h1v1h-1zM372 373h1v1h-1zM378 373h1v1h-1zM384 373h1v1h-1zM390 373h1v1h-1zM396 373h1v1h-1zM402 373h1v1h-1zM408 373h1v1h-1zM414 373h1v1h-1zM420 373h1v1h-1zM426 373h1v1h-1zM432 373h1v1h-1zM438 373h1v1h-1zM444 373h1v1h-1zM450 373h1v1h-1zM456 373h1v1h-1zM462 373h1v1h-1zM468 373h1v1h-1zM474 373h1v1h-1zM480 373h1v1h-1zM486 373h1v1h-1zM492 373h1v1h-1zM498 373h1v1h-1zM504 373h1v1h-1zM510 373h1v1h-1zM516 373h1v1h-1zM522 373h1v1h-1zM528 373h1v1h-1zM534 373h1v1h-1zM540 373h1v1h-1zM546 373h1v1h-1zM552 373h1v1h-1zM558 373h1v1h-1zM564 373h1v1h-1zM570 373h1v1h-1zM576 373h1v1h-1zM582 373h1v1h-1zM588 373h1v1h-1zM594 373h1v1h-1zM600 373h1v1h-1zM606 373h1v1h-1zM612 373h1v1h-1zM618 373h1v1h-1zM624 373h1v1h-1zM630 373h1v1h-1zM636 373h1v1h-1zM642 373h1v1h-1zM648 373h1v1h-1zM654 373h1v1h-1zM660 373h1v1h-1zM666 373h1v1h-1zM672 373h1v1h-1zM678 373h1v1h-1zM684 373h1v1h-1zM690 373h1v1h-1zM696 373h1v1h-1zM702 373h1v1h-1zM708 373h1v1h-1zM714 373h1v1h-1zM720 373h1v1h-1zM726 373h1v1h-1zM732 373h1v1h-1zM738 373h1v1h-1zM744 373h1v1h-1zM750 373h1v1h-1zM756 373h1v1h-1zM762 373h1v1h-1zM768 373h1v1h-1zM774 373h1v1h-1zM780 373h1v1h-1zM786 373h1v1h-1zM792 373h1v1h-1z" fill="#fff"/><rect x="78" y="73" width="721" height="1" fill="#fff"/><rect x="78" y="433" width="721" height="1" fill="#fff"/><rect x="78" y="73" width="1" height="361" fill="#fff"/><rect x="798" y="73" width="1" height="361" fill="#fff"/><rect x="78" y="253" width="721" height="1" fill="#fff"/><rect x="438" y="73" width="1" height="361" fill="#fff"/><path d="M133.5 54.5L132.5 53.5L130.5 52.5L128.5 52.5L126.5 53.5L125.5 54.5L125.5 55.5L126.5 56.5L126.5 57.5L127.5 57.5L131.5 58.5L132.5 59.5L133.5 59.5L133.5 61.5L133.5 62.5L132.5 63.5L130.5 64.5L128.5 64.5L126.5 63.5L125.5 62.5M137.5 52.5L137.5 53.5L138.5 52.5L137.5 51.5L137.5 52.5M137.5 56.5L137.5 64.5M142.5 56.5L142.5 64.5M142.5 58.5L144.5 57.5L145.5 56.5L147.5 56.5L148.5 57.5L149.5 58.5L149.5 64.5M149.5 58.5L150.5 57.5L152.5 56.5L153.5 56.5L155.5 57.5L155.5 58.5L155.5 64.5M160.5 56.5L160.5 68.5M160.5 58.5L161.5 57.5L162.5 56.5L164.5 56.5L165.5 57.5L167.5 58.5L167.5 59.5L167.5 61.5L167.5 62.5L165.5 63.5L164.5 64.5L162.5 64.5L161.5 63.5L160.5 62.5M171.5 52.5L171.5 64.5M175.5 59.5L183.5 59.5L183.5 58.5L182.5 57.5L181.5 57.5L180.5 56.5L178.5 56.5L177.5 57.5L176.5 58.5L175.5 59.5L175.5 61.5L176.5 62.5L177.5 63.5L178.5 64.5L180.5 64.5L181.5 63.5L183.5 62.5M204.5 55.5L204.5 54.5L203.5 53.5L201.5 52.5L199.5 52.5L198.5 53.5L197.5 54.5L196.5 55.5L196.5 57.5L196.5 59.5L196.5 61.5L197.5 62.5L198.5 63.5L199.5 64.5L201.5 64.5L203.5 63.5L204.5 62.5L204.5 61.5M207.5 56.5L211.5 64.5M215.5 56.5L211.5 64.5L210.5 66.5L209.5 67.5L207.5 68.5L207.5 68.5M218.5 52.5L218.5 64.5M222.5 52.5L223.5 53.5L223.5 52.5L223.5 51.5L222.5 52.5M223.5 56.5L223.5 64.5M228.5 56.5L228.5 64.5M228.5 58.5L229.5 57.5L231.5 56.5L232.5 56.5L234.5 57.5L234.5 58.5L234.5 64.5M245.5 52.5L245.5 64.5M245.5 58.5L244.5 57.5L243.5 56.5L241.5 56.5L240.5 57.5L239.5 58.5L238.5 59.5L238.5 61.5L239.5 62.5L240.5 63.5L241.5 64.5L243.5 64.5L244.5 63.5L245.5 62.5M250.5 56.5L250.5 64.5M250.5 59.5L251.5 58.5L252.5 57.5L253.5 56.5L255.5 56.5M257.5 52.5L258.5 53.5L258.5 52.5L258.5 51.5L257.5 52.5M258.5 56.5L258.5 64.5M269.5 58.5L268.5 57.5L267.5 56.5L265.5 56.5L264.5 57.5L263.5 58.5L262.5 59.5L262.5 61.5L263.5 62.5L264.5 63.5L265.5 64.5L267.5 64.5L268.5 63.5L269.5 62.5M280.5 56.5L280.5 64.5M280.5 58.5L279.5 57.5L277.5 56.5L276.5 56.5L274.5 57.5L273.5 58.5L273.5 59.5L273.5 61.5L273.5 62.5L274.5 63.5L276.5 64.5L277.5 64.5L279.5 63.5L280.5 62.5M285.5 52.5L285.5 64.5M307.5 55.5L306.5 54.5L305.5 53.5L304.5 52.5L302.5 52.5L301.5 53.5L299.5 54.5L299.5 55.5L298.5 57.5L298.5 59.5L299.5 61.5L299.5 62.5L301.5 63.5L302.5 64.5L304.5 64.5L305.5 63.5L306.5 62.5L307.5 61.5M314.5 56.5L312.5 57.5L311.5 58.5L311.5 59.5L311.5 61.5L311.5 62.5L312.5 63.5L314.5 64.5L315.5 64.5L317.5 63.5L318.5 62.5L318.5 61.5L318.5 59.5L318.5 58.5L317.5 57.5L315.5 56.5L314.5 56.5M321.5 56.5L325.5 64.5M328.5 56.5L325.5 64.5M331.5 59.5L338.5 59.5L338.5 58.5L338.5 57.5L337.5 57.5L336.5 56.5L334.5 56.5L333.5 57.5L332.5 58.5L331.5 59.5L331.5 61.5L332.5 62.5L333.5 63.5L334.5 64.5L336.5 64.5L337.5 63.5L338.5 62.5M343.5 56.5L343.5 64.5M343.5 59.5L343.5 58.5L344.5 57.5L346.5 56.5L347.5 56.5M357.5 56.5L357.5 64.5M357.5 58.5L356.5 57.5L354.5 56.5L353.5 56.5L352.5 57.5L350.5 58.5L350.5 59.5L350.5 61.5L350.5 62.5L352.5 63.5L353.5 64.5L354.5 64.5L356.5 63.5L357.5 62.5M368.5 56.5L368.5 65.5L368.5 67.5L367.5 67.5L366.5 68.5L364.5 68.5L363.5 67.5M368.5 58.5L367.5 57.5L366.5 56.5L364.5 56.5L363.5 57.5L362.5 58.5L361.5 59.5L361.5 61.5L362.5 62.5L363.5 63.5L364.5 64.5L366.5 64.5L367.5 63.5L368.5 62.5M372.5 59.5L379.5 59.5L379.5 58.5L379.5 57.5L378.5 57.5L377.5 56.5L375.5 56.5L374.5 57.5L373.5 58.5L372.5 59.5L372.5 61.5L373.5 62.5L374.5 63.5L375.5 64.5L377.5 64.5L378.5 63.5L379.5 62.5M393.5 52.5L393.5 64.5M393.5 52.5L398.5 64.5M403.5 52.5L398.5 64.5M403.5 52.5L403.5 64.5M414.5 56.5L414.5 64.5M414.5 58.5L413.5 57.5L411.5 56.5L410.5 56.5L408.5 57.5L407.5 58.5L407.5 59.5L407.5 61.5L407.5 62.5L408.5 63.5L410.5 64.5L411.5 64.5L413.5 63.5L414.5 62.5M419.5 56.5L419.5 68.5M419.5 58.5L420.5 57.5L421.5 56.5L423.5 56.5L424.5 57.5L425.5 58.5L426.5 59.5L426.5 61.5L425.5 62.5L424.5 63.5L423.5 64.5L421.5 64.5L420.5 63.5L419.5 62.5M447.5 54.5L446.5 53.5L444.5 52.5L442.5 52.5L440.5 53.5L439.5 54.5L439.5 55.5L439.5 56.5L440.5 57.5L441.5 57.5L445.5 58.5L446.5 59.5L446.5 59.5L447.5 61.5L447.5 62.5L446.5 63.5L444.5 64.5L442.5 64.5L440.5 63.5L439.5 62.5M451.5 52.5L451.5 64.5M451.5 58.5L453.5 57.5L454.5 56.5L456.5 56.5L457.5 57.5L458.5 58.5L458.5 64.5M465.5 56.5L464.5 57.5L462.5 58.5L462.5 59.5L462.5 61.5L462.5 62.5L464.5 63.5L465.5 64.5L467.5 64.5L468.5 63.5L469.5 62.5L470.5 61.5L470.5 59.5L469.5 58.5L468.5 57.5L467.5 56.5L465.5 56.5M473.5 56.5L475.5 64.5M478.5 56.5L475.5 64.5M478.5 56.5L480.5 64.5M483.5 56.5L480.5 64.5M486.5 52.5L487.5 53.5L487.5 52.5L487.5 51.5L486.5 52.5M487.5 56.5L487.5 64.5M491.5 56.5L491.5 64.5M491.5 58.5L493.5 57.5L494.5 56.5L496.5 56.5L497.5 57.5L498.5 58.5L498.5 64.5M509.5 56.5L509.5 65.5L509.5 67.5L508.5 67.5L507.5 68.5L505.5 68.5L504.5 67.5M509.5 58.5L508.5 57.5L507.5 56.5L505.5 56.5L504.5 57.5L503.5 58.5L502.5 59.5L502.5 61.5L503.5 62.5L504.5 63.5L505.5 64.5L507.5 64.5L508.5 63.5L509.5 62.5M523.5 52.5L523.5 64.5M523.5 52.5L528.5 64.5M533.5 52.5L528.5 64.5M533.5 52.5L533.5 64.5M537.5 52.5L538.5 53.5L538.5 52.5L538.5 51.5L537.5 52.5M538.5 56.5L538.5 64.5M542.5 56.5L542.5 64.5M542.5 58.5L544.5 57.5L545.5 56.5L547.5 56.5L548.5 57.5L549.5 58.5L549.5 64.5M553.5 52.5L554.5 53.5L554.5 52.5L554.5 51.5L553.5 52.5M554.5 56.5L554.5 64.5M558.5 56.5L558.5 64.5M558.5 58.5L560.5 57.5L561.5 56.5L563.5 56.5L564.5 57.5L565.5 58.5L565.5 64.5M565.5 58.5L567.5 57.5L568.5 56.5L570.5 56.5L571.5 57.5L572.5 58.5L572.5 64.5M576.5 56.5L576.5 62.5L577.5 63.5L578.5 64.5L580.5 64.5L581.5 63.5L583.5 62.5M583.5 56.5L583.5 64.5M588.5 56.5L588.5 64.5M588.5 58.5L589.5 57.5L591.5 56.5L592.5 56.5L593.5 57.5L594.5 58.5L594.5 64.5M594.5 58.5L596.5 57.5L597.5 56.5L599.5 56.5L600.5 57.5L601.5 58.5L601.5 64.5M615.5 52.5L615.5 64.5M615.5 52.5L623.5 52.5M615.5 58.5L620.5 58.5M615.5 64.5L623.5 64.5M626.5 56.5L626.5 64.5M626.5 58.5L628.5 57.5L629.5 56.5L631.5 56.5L632.5 57.5L633.5 58.5L633.5 64.5M633.5 58.5L634.5 57.5L636.5 56.5L637.5 56.5L639.5 57.5L639.5 58.5L639.5 64.5M643.5 52.5L644.5 53.5L644.5 52.5L644.5 51.5L643.5 52.5M644.5 56.5L644.5 64.5M655.5 58.5L654.5 57.5L652.5 56.5L650.5 56.5L649.5 57.5L648.5 58.5L649.5 59.5L650.5 59.5L653.5 60.5L654.5 61.5L655.5 62.5L655.5 62.5L654.5 63.5L652.5 64.5L650.5 64.5L649.5 63.5L648.5 62.5M665.5 58.5L664.5 57.5L662.5 56.5L660.5 56.5L659.5 57.5L658.5 58.5L659.5 59.5L660.5 59.5L663.5 60.5L664.5 61.5L665.5 62.5L665.5 62.5L664.5 63.5L662.5 64.5L660.5 64.5L659.5 63.5L658.5 62.5M668.5 52.5L669.5 53.5L669.5 52.5L669.5 51.5L668.5 52.5M669.5 56.5L669.5 64.5M676.5 56.5L675.5 57.5L674.5 58.5L673.5 59.5L673.5 61.5L674.5 62.5L675.5 63.5L676.5 64.5L678.5 64.5L679.5 63.5L680.5 62.5L681.5 61.5L681.5 59.5L680.5 58.5L679.5 57.5L678.5 56.5L676.5 56.5M685.5 56.5L685.5 64.5M685.5 58.5L687.5 57.5L688.5 56.5L690.5 56.5L691.5 57.5L691.5 58.5L691.5 64.5M709.5 52.5L704.5 64.5M709.5 52.5L713.5 64.5M706.5 60.5L711.5 60.5M716.5 56.5L716.5 64.5M716.5 58.5L718.5 57.5L719.5 56.5L721.5 56.5L722.5 57.5L723.5 58.5L723.5 64.5M734.5 56.5L734.5 65.5L733.5 67.5L733.5 67.5L732.5 68.5L730.5 68.5L729.5 67.5M734.5 58.5L733.5 57.5L732.5 56.5L730.5 56.5L729.5 57.5L727.5 58.5L727.5 59.5L727.5 61.5L727.5 62.5L729.5 63.5L730.5 64.5L732.5 64.5L733.5 63.5L734.5 62.5M739.5 52.5L739.5 64.5M743.5 59.5L750.5 59.5L750.5 58.5L749.5 57.5L749.5 57.5L748.5 56.5L746.5 56.5L745.5 57.5L743.5 58.5L743.5 59.5L743.5 61.5L743.5 62.5L745.5 63.5L746.5 64.5L748.5 64.5L749.5 63.5L750.5 62.5M62.5 130.5L62.5 129.5L60.5 129.5L60.5 129.5L58.5 129.5L57.5 131.5L56.5 133.5L56.5 136.5L57.5 138.5L58.5 139.5L60.5 139.5L60.5 139.5L62.5 139.5L62.5 138.5L63.5 136.5L63.5 136.5L62.5 134.5L62.5 133.5L60.5 133.5L60.5 133.5L58.5 133.5L57.5 134.5L56.5 136.5M69.5 129.5L68.5 129.5L66.5 131.5L66.5 133.5L66.5 135.5L66.5 137.5L68.5 139.5L69.5 139.5L70.5 139.5L72.5 139.5L72.5 137.5L73.5 135.5L73.5 133.5L72.5 131.5L72.5 129.5L70.5 129.5L69.5 129.5M57.5 189.5L62.5 189.5L60.5 193.5L61.5 193.5L62.5 193.5L62.5 194.5L63.5 195.5L63.5 196.5L62.5 198.5L62.5 199.5L60.5 199.5L58.5 199.5L57.5 199.5L56.5 198.5L56.5 197.5M69.5 189.5L68.5 189.5L66.5 191.5L66.5 193.5L66.5 195.5L66.5 197.5L68.5 199.5L69.5 199.5L70.5 199.5L72.5 199.5L72.5 197.5L73.5 195.5L73.5 193.5L72.5 191.5L72.5 189.5L70.5 189.5L69.5 189.5M69.5 249.5L68.5 249.5L66.5 251.5L66.5 253.5L66.5 255.5L66.5 257.5L68.5 259.5L69.5 259.5L70.5 259.5L72.5 259.5L72.5 257.5L73.5 255.5L73.5 253.5L72.5 251.5L72.5 249.5L70.5 249.5L69.5 249.5M44.5 315.5L52.5 315.5M57.5 309.5L62.5 309.5L60.5 313.5L61.5 313.5L62.5 313.5L62.5 314.5L63.5 315.5L63.5 316.5L62.5 318.5L62.5 319.5L60.5 319.5L58.5 319.5L57.5 319.5L56.5 318.5L56.5 317.5M69.5 309.5L68.5 309.5L66.5 311.5L66.5 313.5L66.5 315.5L66.5 317.5L68.5 319.5L69.5 319.5L70.5 319.5L72.5 319.5L72.5 317.5L73.5 315.5L73.5 313.5L72.5 311.5L72.5 309.5L70.5 309.5L69.5 309.5M44.5 375.5L52.5 375.5M62.5 370.5L62.5 369.5L60.5 369.5L60.5 369.5L58.5 369.5L57.5 371.5L56.5 373.5L56.5 376.5L57.5 378.5L58.5 379.5L60.5 379.5L60.5 379.5L62.5 379.5L62.5 378.5L63.5 376.5L63.5 376.5L62.5 374.5L62.5 373.5L60.5 373.5L60.5 373.5L58.5 373.5L57.5 374.5L56.5 376.5M69.5 369.5L68.5 369.5L66.5 371.5L66.5 373.5L66.5 375.5L66.5 377.5L68.5 379.5L69.5 379.5L70.5 379.5L72.5 379.5L72.5 377.5L73.5 375.5L73.5 373.5L72.5 371.5L72.5 369.5L70.5 369.5L69.5 369.5M62.5 77.5L62.5 79.5L61.5 80.5L60.5 80.5L59.5 80.5L58.5 80.5L56.5 79.5L56.5 77.5L56.5 77.5L56.5 75.5L58.5 74.5L59.5 74.5L60.5 74.5L61.5 74.5L62.5 75.5L62.5 77.5L62.5 80.5L62.5 82.5L61.5 84.5L60.5 84.5L58.5 84.5L57.5 84.5L56.5 83.5M69.5 74.5L68.5 74.5L66.5 76.5L66.5 78.5L66.5 80.5L66.5 82.5L68.5 84.5L69.5 84.5L70.5 84.5L72.5 84.5L72.5 82.5L73.5 80.5L73.5 78.5L72.5 76.5L72.5 74.5L70.5 74.5L69.5 74.5M44.5 429.5L52.5 429.5M62.5 426.5L62.5 428.5L61.5 429.5L60.5 429.5L59.5 429.5L58.5 429.5L56.5 428.5L56.5 426.5L56.5 426.5L56.5 424.5L58.5 423.5L59.5 423.5L60.5 423.5L61.5 423.5L62.5 424.5L62.5 426.5L62.5 429.5L62.5 431.5L61.5 433.5L60.5 433.5L58.5 433.5L57.5 433.5L56.5 432.5M69.5 423.5L68.5 423.5L66.5 425.5L66.5 427.5L66.5 429.5L66.5 431.5L68.5 433.5L69.5 433.5L70.5 433.5L72.5 433.5L72.5 431.5L73.5 429.5L73.5 427.5L72.5 425.5L72.5 423.5L70.5 423.5L69.5 423.5M66.5 448.5L67.5 447.5L68.5 446.5L68.5 455.5M76.5 446.5L75.5 446.5L74.5 447.5L74.5 448.5L75.5 449.5L76.5 449.5L78.5 450.5L79.5 450.5L80.5 451.5L81.5 452.5L81.5 453.5L80.5 454.5L80.5 455.5L78.5 455.5L76.5 455.5L75.5 455.5L74.5 454.5L74.5 453.5L74.5 452.5L74.5 451.5L75.5 450.5L77.5 450.5L79.5 449.5L80.5 449.5L80.5 448.5L80.5 447.5L80.5 446.5L78.5 446.5L76.5 446.5M86.5 446.5L85.5 446.5L84.5 448.5L83.5 450.5L83.5 451.5L84.5 453.5L85.5 455.5L86.5 455.5L87.5 455.5L89.5 455.5L90.5 453.5L90.5 451.5L90.5 450.5L90.5 448.5L89.5 446.5L87.5 446.5L86.5 446.5M126.5 448.5L127.5 447.5L128.5 446.5L128.5 455.5M140.5 446.5L135.5 446.5L134.5 450.5L135.5 449.5L136.5 449.5L138.5 449.5L139.5 449.5L140.5 450.5L141.5 452.5L141.5 452.5L140.5 454.5L139.5 455.5L138.5 455.5L136.5 455.5L135.5 455.5L134.5 454.5L134.5 453.5M146.5 446.5L145.5 446.5L144.5 448.5L143.5 450.5L143.5 451.5L144.5 453.5L145.5 455.5L146.5 455.5L147.5 455.5L149.5 455.5L150.5 453.5L150.5 451.5L150.5 450.5L150.5 448.5L149.5 446.5L147.5 446.5L146.5 446.5M186.5 448.5L187.5 447.5L188.5 446.5L188.5 455.5M194.5 448.5L194.5 448.5L195.5 447.5L195.5 446.5L196.5 446.5L198.5 446.5L199.5 446.5L200.5 447.5L200.5 448.5L200.5 449.5L200.5 449.5L199.5 451.5L194.5 455.5L201.5 455.5M206.5 446.5L205.5 446.5L204.5 448.5L203.5 450.5L203.5 451.5L204.5 453.5L205.5 455.5L206.5 455.5L207.5 455.5L209.5 455.5L210.5 453.5L210.5 451.5L210.5 450.5L210.5 448.5L209.5 446.5L207.5 446.5L206.5 446.5M256.5 449.5L256.5 450.5L255.5 451.5L253.5 452.5L253.5 452.5L251.5 451.5L250.5 450.5L250.5 449.5L250.5 449.5L250.5 447.5L251.5 446.5L253.5 446.5L253.5 446.5L255.5 446.5L256.5 447.5L256.5 449.5L256.5 451.5L256.5 453.5L255.5 455.5L253.5 455.5L252.5 455.5L251.5 455.5L250.5 454.5M262.5 446.5L261.5 446.5L260.5 448.5L259.5 450.5L259.5 451.5L260.5 453.5L261.5 455.5L262.5 455.5L263.5 455.5L265.5 455.5L266.5 453.5L266.5 451.5L266.5 450.5L266.5 448.5L265.5 446.5L263.5 446.5L262.5 446.5M316.5 447.5L315.5 446.5L314.5 446.5L313.5 446.5L312.5 446.5L311.5 448.5L310.5 450.5L310.5 452.5L311.5 454.5L312.5 455.5L313.5 455.5L314.5 455.5L315.5 455.5L316.5 454.5L316.5 452.5L316.5 452.5L316.5 451.5L315.5 450.5L314.5 449.5L313.5 449.5L312.5 450.5L311.5 451.5L310.5 452.5M322.5 446.5L321.5 446.5L320.5 448.5L319.5 450.5L319.5 451.5L320.5 453.5L321.5 455.5L322.5 455.5L323.5 455.5L324.5 455.5L325.5 453.5L326.5 451.5L326.5 450.5L325.5 448.5L324.5 446.5L323.5 446.5L322.5 446.5M371.5 446.5L376.5 446.5L373.5 449.5L375.5 449.5L376.5 450.5L376.5 450.5L377.5 452.5L377.5 452.5L376.5 454.5L375.5 455.5L374.5 455.5L372.5 455.5L371.5 455.5L370.5 454.5L370.5 453.5M382.5 446.5L381.5 446.5L380.5 448.5L379.5 450.5L379.5 451.5L380.5 453.5L381.5 455.5L382.5 455.5L383.5 455.5L385.5 455.5L386.5 453.5L386.5 451.5L386.5 450.5L386.5 448.5L385.5 446.5L383.5 446.5L382.5 446.5M438.5 446.5L436.5 446.5L435.5 448.5L435.5 450.5L435.5 451.5L435.5 453.5L436.5 455.5L438.5 455.5L438.5 455.5L440.5 455.5L441.5 453.5L441.5 451.5L441.5 450.5L441.5 448.5L440.5 446.5L438.5 446.5L438.5 446.5M486.5 446.5L491.5 446.5L489.5 449.5L490.5 449.5L491.5 450.5L491.5 450.5L492.5 452.5L492.5 452.5L491.5 454.5L490.5 455.5L489.5 455.5L488.5 455.5L486.5 455.5L486.5 454.5L485.5 453.5M496.5 446.5L501.5 446.5L498.5 449.5L499.5 449.5L500.5 450.5L501.5 450.5L501.5 452.5L501.5 452.5L501.5 454.5L500.5 455.5L498.5 455.5L497.5 455.5L496.5 455.5L495.5 454.5L495.5 453.5M507.5 446.5L506.5 446.5L505.5 448.5L504.5 450.5L504.5 451.5L505.5 453.5L506.5 455.5L507.5 455.5L508.5 455.5L509.5 455.5L510.5 453.5L511.5 451.5L511.5 450.5L510.5 448.5L509.5 446.5L508.5 446.5L507.5 446.5M546.5 446.5L551.5 446.5L549.5 449.5L550.5 449.5L551.5 450.5L551.5 450.5L552.5 452.5L552.5 452.5L551.5 454.5L550.5 455.5L549.5 455.5L548.5 455.5L546.5 455.5L546.5 454.5L545.5 453.5M558.5 446.5L556.5 446.5L555.5 448.5L555.5 450.5L555.5 451.5L555.5 453.5L556.5 455.5L558.5 455.5L558.5 455.5L560.5 455.5L561.5 453.5L561.5 451.5L561.5 450.5L561.5 448.5L560.5 446.5L558.5 446.5L558.5 446.5M567.5 446.5L566.5 446.5L565.5 448.5L564.5 450.5L564.5 451.5L565.5 453.5L566.5 455.5L567.5 455.5L568.5 455.5L569.5 455.5L570.5 453.5L571.5 451.5L571.5 450.5L570.5 448.5L569.5 446.5L568.5 446.5L567.5 446.5M606.5 448.5L606.5 448.5L606.5 447.5L607.5 446.5L608.5 446.5L610.5 446.5L610.5 446.5L611.5 447.5L611.5 448.5L611.5 449.5L611.5 449.5L610.5 451.5L605.5 455.5L612.5 455.5M621.5 446.5L617.5 455.5M615.5 446.5L621.5 446.5M627.5 446.5L626.5 446.5L625.5 448.5L624.5 450.5L624.5 451.5L625.5 453.5L626.5 455.5L627.5 455.5L628.5 455.5L629.5 455.5L630.5 453.5L631.5 451.5L631.5 450.5L630.5 448.5L629.5 446.5L628.5 446.5L627.5 446.5M666.5 448.5L666.5 448.5L666.5 447.5L667.5 446.5L668.5 446.5L670.5 446.5L670.5 446.5L671.5 447.5L671.5 448.5L671.5 449.5L671.5 449.5L670.5 451.5L665.5 455.5L672.5 455.5M679.5 446.5L675.5 452.5L682.5 452.5M679.5 446.5L679.5 455.5M687.5 446.5L686.5 446.5L685.5 448.5L684.5 450.5L684.5 451.5L685.5 453.5L686.5 455.5L687.5 455.5L688.5 455.5L689.5 455.5L690.5 453.5L691.5 451.5L691.5 450.5L690.5 448.5L689.5 446.5L688.5 446.5L687.5 446.5M726.5 448.5L726.5 448.5L726.5 447.5L727.5 446.5L728.5 446.5L730.5 446.5L730.5 446.5L731.5 447.5L731.5 448.5L731.5 449.5L731.5 449.5L730.5 451.5L725.5 455.5L732.5 455.5M736.5 448.5L737.5 447.5L738.5 446.5L738.5 455.5M747.5 446.5L746.5 446.5L745.5 448.5L744.5 450.5L744.5 451.5L745.5 453.5L746.5 455.5L747.5 455.5L748.5 455.5L749.5 455.5L750.5 453.5L751.5 451.5L751.5 450.5L750.5 448.5L749.5 446.5L748.5 446.5L747.5 446.5M786.5 448.5L787.5 447.5L788.5 446.5L788.5 455.5M796.5 446.5L795.5 446.5L794.5 447.5L794.5 448.5L795.5 449.5L796.5 449.5L798.5 450.5L799.5 450.5L800.5 451.5L801.5 452.5L801.5 453.5L800.5 454.5L800.5 455.5L798.5 455.5L796.5 455.5L795.5 455.5L794.5 454.5L794.5 453.5L794.5 452.5L794.5 451.5L795.5 450.5L797.5 450.5L799.5 449.5L800.5 449.5L800.5 448.5L800.5 447.5L800.5 446.5L798.5 446.5L796.5 446.5M806.5 446.5L805.5 446.5L804.5 448.5L803.5 450.5L803.5 451.5L804.5 453.5L805.5 455.5L806.5 455.5L807.5 455.5L809.5 455.5L810.5 453.5L810.5 451.5L810.5 450.5L810.5 448.5L809.5 446.5L807.5 446.5L806.5 446.5M403.5 465.5L403.5 475.5M403.5 475.5L409.5 475.5M414.5 468.5L413.5 469.5L412.5 470.5L411.5 471.5L411.5 472.5L412.5 474.5L413.5 475.5L414.5 475.5L415.5 475.5L416.5 475.5L417.5 474.5L417.5 472.5L417.5 471.5L417.5 470.5L416.5 469.5L415.5 468.5L414.5 468.5M421.5 468.5L421.5 475.5M421.5 470.5L422.5 469.5L423.5 468.5L425.5 468.5L426.5 469.5L426.5 470.5L426.5 475.5M435.5 468.5L435.5 476.5L435.5 477.5L434.5 478.5L433.5 478.5L432.5 478.5L431.5 478.5M435.5 470.5L434.5 469.5L433.5 468.5L432.5 468.5L431.5 469.5L430.5 470.5L430.5 471.5L430.5 472.5L430.5 474.5L431.5 475.5L432.5 475.5L433.5 475.5L434.5 475.5L435.5 474.5M439.5 465.5L439.5 465.5L440.5 465.5L439.5 465.5L439.5 465.5M439.5 468.5L439.5 475.5M444.5 465.5L444.5 473.5L444.5 475.5L445.5 475.5L446.5 475.5M442.5 468.5L445.5 468.5M449.5 468.5L449.5 473.5L449.5 475.5L450.5 475.5L452.5 475.5L453.5 475.5L454.5 473.5M454.5 468.5L454.5 475.5M463.5 465.5L463.5 475.5M463.5 470.5L462.5 469.5L461.5 468.5L460.5 468.5L459.5 469.5L458.5 470.5L458.5 471.5L458.5 472.5L458.5 474.5L459.5 475.5L460.5 475.5L461.5 475.5L462.5 475.5L463.5 474.5M467.5 471.5L473.5 471.5L473.5 470.5L472.5 469.5L472.5 469.5L471.5 468.5L469.5 468.5L468.5 469.5L467.5 470.5L467.5 471.5L467.5 472.5L467.5 474.5L468.5 475.5L469.5 475.5L471.5 475.5L472.5 475.5L473.5 474.5M19.5 282.5L29.5 282.5M29.5 282.5L29.5 276.5M22.5 268.5L29.5 268.5M24.5 268.5L23.5 269.5L22.5 270.5L22.5 272.5L23.5 273.5L24.5 274.5L25.5 274.5L26.5 274.5L28.5 274.5L29.5 273.5L29.5 272.5L29.5 270.5L29.5 269.5L28.5 268.5M19.5 264.5L27.5 264.5L29.5 263.5L29.5 263.5L29.5 262.5M22.5 265.5L22.5 262.5M19.5 259.5L19.5 259.5L19.5 258.5L19.5 259.5L19.5 259.5M22.5 259.5L29.5 259.5M19.5 254.5L27.5 254.5L29.5 254.5L29.5 253.5L29.5 252.5M22.5 256.5L22.5 252.5M22.5 249.5L27.5 249.5L29.5 248.5L29.5 247.5L29.5 246.5L29.5 245.5L27.5 244.5M22.5 244.5L29.5 244.5M19.5 234.5L29.5 234.5M24.5 234.5L23.5 235.5L22.5 236.5L22.5 238.5L23.5 239.5L24.5 240.5L25.5 240.5L26.5 240.5L28.5 240.5L29.5 239.5L29.5 238.5L29.5 236.5L29.5 235.5L28.5 234.5M25.5 231.5L25.5 225.5L24.5 225.5L23.5 225.5L23.5 226.5L22.5 227.5L22.5 228.5L23.5 229.5L24.5 230.5L25.5 231.5L26.5 231.5L28.5 230.5L29.5 229.5L29.5 228.5L29.5 227.5L29.5 226.5L28.5 225.5M535.5 487.5L535.5 496.5M535.5 487.5L538.5 496.5M542.5 487.5L538.5 496.5M542.5 487.5L542.5 496.5M545.5 487.5L545.5 487.5L546.5 487.5L545.5 487.5L545.5 487.5M545.5 490.5L545.5 496.5M549.5 490.5L549.5 496.5M549.5 492.5L550.5 490.5L551.5 490.5L552.5 490.5L553.5 490.5L554.5 492.5L554.5 496.5M557.5 487.5L557.5 487.5L558.5 487.5L557.5 487.5L557.5 487.5M557.5 490.5L557.5 496.5M561.5 490.5L561.5 496.5M561.5 492.5L562.5 490.5L563.5 490.5L564.5 490.5L565.5 490.5L566.5 492.5L566.5 496.5M566.5 492.5L567.5 490.5L568.5 490.5L569.5 490.5L570.5 490.5L570.5 492.5L570.5 496.5M574.5 490.5L574.5 494.5L574.5 496.5L575.5 496.5L577.5 496.5L577.5 496.5L579.5 494.5M579.5 490.5L579.5 496.5M582.5 490.5L582.5 496.5M582.5 492.5L584.5 490.5L584.5 490.5L586.5 490.5L587.5 490.5L587.5 492.5L587.5 496.5M587.5 492.5L588.5 490.5L589.5 490.5L590.5 490.5L591.5 490.5L592.5 492.5L592.5 496.5M602.5 487.5L602.5 496.5M602.5 487.5L608.5 487.5M602.5 491.5L606.5 491.5M602.5 496.5L608.5 496.5M611.5 490.5L611.5 496.5M611.5 492.5L612.5 490.5L613.5 490.5L614.5 490.5L615.5 490.5L615.5 492.5L615.5 496.5M615.5 492.5L617.5 490.5L618.5 490.5L619.5 490.5L620.5 490.5L620.5 492.5L620.5 496.5M623.5 487.5L624.5 487.5L624.5 487.5L624.5 487.5L623.5 487.5M624.5 490.5L624.5 496.5M632.5 491.5L631.5 490.5L630.5 490.5L629.5 490.5L627.5 490.5L627.5 491.5L627.5 492.5L628.5 493.5L630.5 493.5L631.5 493.5L632.5 494.5L632.5 495.5L631.5 496.5L630.5 496.5L629.5 496.5L627.5 496.5L627.5 495.5M639.5 491.5L639.5 490.5L637.5 490.5L636.5 490.5L635.5 490.5L634.5 491.5L635.5 492.5L636.5 493.5L638.5 493.5L639.5 493.5L639.5 494.5L639.5 495.5L639.5 496.5L637.5 496.5L636.5 496.5L635.5 496.5L634.5 495.5M642.5 487.5L642.5 487.5L643.5 487.5L642.5 487.5L642.5 487.5M642.5 490.5L642.5 496.5M647.5 490.5L646.5 490.5L646.5 491.5L645.5 493.5L645.5 493.5L646.5 495.5L646.5 496.5L647.5 496.5L649.5 496.5L649.5 496.5L650.5 495.5L651.5 493.5L651.5 493.5L650.5 491.5L649.5 490.5L649.5 490.5L647.5 490.5M654.5 490.5L654.5 496.5M654.5 492.5L655.5 490.5L656.5 490.5L657.5 490.5L658.5 490.5L659.5 492.5L659.5 496.5M671.5 487.5L668.5 496.5M671.5 487.5L675.5 496.5M669.5 493.5L674.5 493.5M677.5 490.5L677.5 496.5M677.5 492.5L678.5 490.5L679.5 490.5L681.5 490.5L681.5 490.5L682.5 492.5L682.5 496.5M690.5 490.5L690.5 497.5L690.5 498.5L689.5 499.5L688.5 499.5L687.5 499.5L686.5 499.5M690.5 491.5L689.5 490.5L688.5 490.5L687.5 490.5L686.5 490.5L685.5 491.5L685.5 493.5L685.5 493.5L685.5 495.5L686.5 496.5L687.5 496.5L688.5 496.5L689.5 496.5L690.5 495.5M694.5 487.5L694.5 496.5M697.5 493.5L702.5 493.5L702.5 492.5L701.5 491.5L701.5 490.5L700.5 490.5L699.5 490.5L698.5 490.5L697.5 491.5L697.5 493.5L697.5 493.5L697.5 495.5L698.5 496.5L699.5 496.5L700.5 496.5L701.5 496.5L702.5 495.5M438.5 532.5L437.5 532.5L436.5 533.5L435.5 535.5L435.5 536.5L436.5 538.5L437.5 539.5L438.5 539.5L438.5 539.5L439.5 539.5L440.5 538.5L441.5 536.5L441.5 535.5L440.5 533.5L439.5 532.5L438.5 532.5L438.5 532.5M478.5 533.5L479.5 533.5L480.5 532.5L480.5 539.5M486.5 533.5L487.5 533.5L488.5 532.5L488.5 539.5M522.5 534.5L522.5 533.5L522.5 533.5L523.5 532.5L524.5 532.5L525.5 532.5L526.5 532.5L526.5 533.5L527.5 533.5L527.5 534.5L526.5 535.5L525.5 536.5L522.5 539.5L527.5 539.5M529.5 534.5L529.5 533.5L530.5 533.5L530.5 532.5L531.5 532.5L532.5 532.5L533.5 532.5L534.5 533.5L534.5 533.5L534.5 534.5L534.5 535.5L533.5 536.5L529.5 539.5L534.5 539.5M567.5 532.5L571.5 532.5L569.5 535.5L570.5 535.5L571.5 535.5L571.5 535.5L572.5 536.5L572.5 537.5L571.5 538.5L571.5 539.5L569.5 539.5L568.5 539.5L567.5 539.5L567.5 538.5L567.5 538.5M578.5 532.5L574.5 537.5L579.5 537.5M578.5 532.5L578.5 539.5M615.5 532.5L612.5 537.5L617.5 537.5M615.5 532.5L615.5 539.5M624.5 532.5L620.5 532.5L619.5 535.5L620.5 535.5L621.5 534.5L622.5 534.5L623.5 535.5L624.5 535.5L624.5 536.5L624.5 537.5L624.5 538.5L623.5 539.5L622.5 539.5L621.5 539.5L620.5 539.5L619.5 538.5L619.5 538.5M661.5 532.5L657.5 532.5L657.5 535.5L657.5 535.5L659.5 534.5L660.5 534.5L661.5 535.5L662.5 535.5L662.5 536.5L662.5 537.5L662.5 538.5L661.5 539.5L660.5 539.5L659.5 539.5L657.5 539.5L657.5 538.5L657.5 538.5M669.5 533.5L669.5 532.5L667.5 532.5L667.5 532.5L666.5 532.5L665.5 533.5L664.5 535.5L664.5 537.5L665.5 538.5L666.5 539.5L667.5 539.5L667.5 539.5L668.5 539.5L669.5 538.5L669.5 537.5L669.5 537.5L669.5 536.5L668.5 535.5L667.5 535.5L667.5 535.5L666.5 535.5L665.5 536.5L664.5 537.5M706.5 533.5L706.5 532.5L705.5 532.5L704.5 532.5L703.5 532.5L702.5 533.5L702.5 535.5L702.5 537.5L702.5 538.5L703.5 539.5L704.5 539.5L704.5 539.5L706.5 539.5L706.5 538.5L707.5 537.5L707.5 537.5L706.5 536.5L706.5 535.5L704.5 535.5L704.5 535.5L703.5 535.5L702.5 536.5L702.5 537.5M711.5 532.5L710.5 532.5L709.5 533.5L709.5 534.5L710.5 534.5L710.5 535.5L712.5 535.5L713.5 535.5L714.5 536.5L714.5 537.5L714.5 538.5L714.5 538.5L713.5 539.5L712.5 539.5L711.5 539.5L710.5 539.5L709.5 538.5L709.5 538.5L709.5 537.5L709.5 536.5L710.5 535.5L711.5 535.5L713.5 535.5L713.5 534.5L714.5 534.5L714.5 533.5L713.5 532.5L712.5 532.5L711.5 532.5M752.5 532.5L748.5 539.5M747.5 532.5L752.5 532.5M759.5 534.5L759.5 535.5L758.5 536.5L757.5 536.5L757.5 536.5L755.5 536.5L755.5 535.5L754.5 534.5L754.5 534.5L755.5 533.5L755.5 532.5L757.5 532.5L757.5 532.5L758.5 532.5L759.5 533.5L759.5 534.5L759.5 536.5L759.5 538.5L758.5 539.5L757.5 539.5L756.5 539.5L755.5 539.5L755.5 538.5M798.5 534.5L797.5 535.5L797.5 536.5L795.5 536.5L795.5 536.5L794.5 536.5L793.5 535.5L793.5 534.5L793.5 534.5L793.5 533.5L794.5 532.5L795.5 532.5L795.5 532.5L797.5 532.5L797.5 533.5L798.5 534.5L798.5 536.5L797.5 538.5L797.5 539.5L795.5 539.5L795.5 539.5L794.5 539.5L793.5 538.5M801.5 533.5L802.5 533.5L803.5 532.5L803.5 539.5" fill="none" stroke="#fff" stroke-width="1" stroke-linecap="square" stroke-linejoin="miter"/><defs><linearGradient id="cb" x1="0" x2="1" y1="0" y2="0"><stop offset="0" stop-color="#3c0046"/><stop offset="0.125" stop-color="#5a00b4"/><stop offset="0.17" stop-color="#2000f0"/><stop offset="0.19" stop-color="#0000ff"/><stop offset="0.25" stop-color="#0040ff"/><stop offset="0.375" stop-color="#00ffff"/><stop offset="0.44" stop-color="#00ffa0"/><stop offset="0.5" stop-color="#00ff50"/><stop offset="0.56" stop-color="#00ff00"/><stop offset="0.625" stop-color="#50ff00"/><stop offset="0.75" stop-color="#ffff00"/><stop offset="0.875" stop-color="#ff6000"/><stop offset="0.93" stop-color="#ff0000"/><stop offset="1" stop-color="#ff0000"/></linearGradient></defs><rect x="438" y="503" width="361" height="21" fill="url(#cb)"/><path d="M438.5 503.5H798.5V523.5H438.5ZM483.5 503.5V523.5M528.5 503.5V523.5M573.5 503.5V523.5M618.5 503.5V523.5M663.5 503.5V523.5M708.5 503.5V523.5M753.5 503.5V523.5" fill="none" stroke="#fff" stroke-width="1"/>
</svg></body></html>
